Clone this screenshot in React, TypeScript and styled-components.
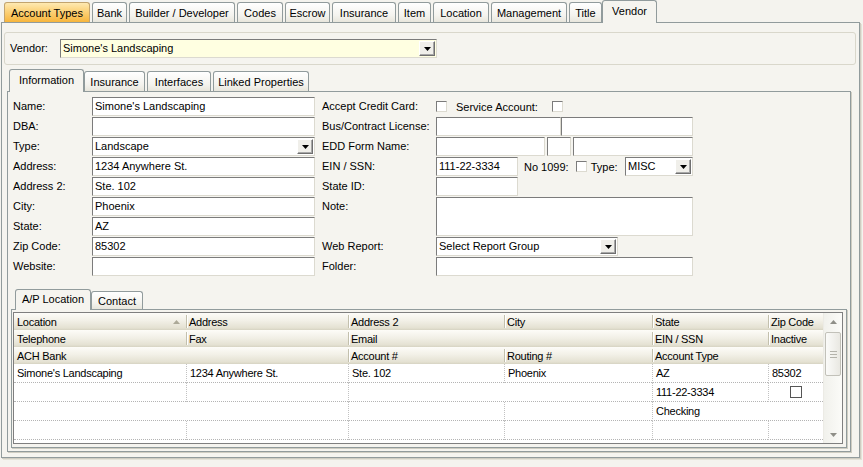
import React from "react";
import styled, { createGlobalStyle, css } from "styled-components";

const BG = "#f5f4ef";
const XP = "#919b9c";

const Global = createGlobalStyle`
  html, body { margin: 0; padding: 0; background: #f4f3ee; }
  body { font-family: "Liberation Sans", Arial, sans-serif; font-size: 11px; color: #000; }
  * { box-sizing: border-box; }
`;

const Screen = styled.div`
  width: 863px;
  height: 467px;
  overflow: hidden;
  background: #f4f3ee;
  display: flex;
  flex-direction: column;
`;

const TabStrip = styled.div<{ $pl: number; $h: number }>`
  display: flex;
  align-items: flex-end;
  gap: 2px;
  height: ${(p) => p.$h}px;
  padding-left: ${(p) => p.$pl}px;
  position: relative;
  z-index: 1;
  flex-shrink: 0;
`;

const Tab = styled.div<{ $w: number; $h: number; $active?: boolean; $hot?: boolean }>`
  width: ${(p) => p.$w}px;
  height: ${(p) => p.$h}px;
  display: flex;
  align-items: center;
  justify-content: center;
  border: 1px solid ${XP};
  border-bottom: none;
  border-radius: 3px 3px 0 0;
  background: linear-gradient(#ffffff, #f4f3ee 65%, #e8e6dc);
  white-space: nowrap;
  flex-shrink: 0;
  ${(p) =>
    p.$hot &&
    css`
      background: linear-gradient(#fee9b2, #fcd47e 40%, #f7b53c);
      border-color: #c2a46e;
    `}
  ${(p) =>
    p.$active &&
    css`
      width: ${p.$w + 4}px;
      height: ${p.$h + 3}px;
      margin: 0 -2px -1px;
      padding-bottom: 2px;
      background: ${BG};
    `}
`;

const MainPanel = styled.div`
  margin-left: 1px;
  width: 859px;
  border: 1px solid ${XP};
  background: ${BG};
  padding: 0 0 5px;
  box-shadow: 1px 1px 0 #cfcdc2, 2px 2px 0 #e4e2d8;
`;

const VendorBox = styled.div`
  margin: 9px 3px 0 2px;
  height: 33px;
  border: 1px solid #d9d7cb;
  border-radius: 3px;
  display: flex;
  align-items: center;
  padding-left: 5px;
`;

const Label = styled.div<{ $w?: number; $top?: boolean }>`
  ${(p) => (p.$w ? `width: ${p.$w}px;` : "")}
  display: flex;
  align-items: ${(p) => (p.$top ? "flex-start" : "center")};
  padding-top: ${(p) => (p.$top ? 3 : 0)}px;
  padding-bottom: ${(p) => (p.$top ? 0 : 2)}px;
  white-space: nowrap;
  flex-shrink: 0;
`;

const Input = styled.div<{ $w?: number; $h?: number; $bg?: string }>`
  width: ${(p) => (p.$w ? `${p.$w}px` : "100%")};
  height: ${(p) => p.$h ?? 19}px;
  background: ${(p) => p.$bg ?? "#ffffff"};
  border: 1px solid;
  border-color: #7b7b7b #dcdad0 #dcdad0 #7b7b7b;
  padding-left: 2px;
  line-height: 17px;
  white-space: nowrap;
  overflow: hidden;
  flex-shrink: 0;
`;

const SelectBox = styled(Input)`
  display: flex;
  align-items: center;
  padding: 0 1px 0 2px;
`;

const SelectText = styled.span`
  flex: 1;
  overflow: hidden;
`;

const DropBtn = styled.span`
  width: 16px;
  height: 15px;
  display: flex;
  align-items: center;
  justify-content: center;
  background: #f0efea;
  border: 1px solid;
  border-color: #ffffff #6f6f6f #6f6f6f #ffffff;
  box-shadow: inset -1px -1px 0 #a8a8a8;
  flex-shrink: 0;
`;

const Check = styled.span<{ $ml?: number; $size?: number; $flat?: boolean }>`
  display: inline-block;
  width: ${(p) => p.$size ?? 11}px;
  height: ${(p) => p.$size ?? 11}px;
  margin-left: ${(p) => p.$ml ?? 0}px;
  background: #ffffff;
  border: 1px solid;
  border-color: ${(p) => (p.$flat ? "#555555" : "#7b7b7b #dcdad0 #dcdad0 #7b7b7b")};
  flex-shrink: 0;
`;

const Text = styled.span<{ $ml?: number }>`
  margin-left: ${(p) => p.$ml ?? 0}px;
  white-space: nowrap;
  flex-shrink: 0;
`;

const InfoArea = styled.div`
  margin: 4px 0 0 5px;
  width: 844px;
`;

const InfoPanel = styled.div`
  border: 1px solid ${XP};
  background: ${BG};
  padding: 5px 2px 3px 3px;
  box-shadow: 1px 1px 0 #cfcdc2;
`;

const Form = styled.div`
  display: flex;
  gap: 7px;
  margin-left: 2px;
`;

const LeftGrid = styled.div`
  display: grid;
  grid-template-columns: 79px 223px;
  grid-auto-rows: 19px;
  row-gap: 1px;
`;

const RightGrid = styled.div`
  display: grid;
  grid-template-columns: 114px 257px;
  grid-template-rows: 19px 19px 19px 19px 19px 39px 19px 19px;
  row-gap: 1px;
`;

const Line = styled.div<{ $gap?: number }>`
  display: flex;
  align-items: center;
  gap: ${(p) => p.$gap ?? 0}px;
`;

const APArea = styled.div`
  margin-top: 13px;
  width: 836px;
`;

const APPanel = styled.div`
  height: 139px;
  border: 1px solid ${XP};
  background: ${BG};
  padding: 2px 3px 3px 1px;
  box-shadow: 1px 1px 0 #cfcdc2;
`;

const Grid = styled.div`
  width: 830px;
  height: 132px;
  border: 1px solid #7f7f7f;
  background: #ffffff;
  display: flex;
  overflow: hidden;
`;

const GridBody = styled.div`
  width: 809px;
  display: flex;
  flex-direction: column;
  letter-spacing: -0.25px;
`;

const cols = "172px 162px 156px 148px 116px 55px";

const GridRow = styled.div`
  display: grid;
  grid-template-columns: ${cols};
`;

const HeadCell = styled.div<{ $span?: number; $sep?: boolean }>`
  grid-column: span ${(p) => p.$span ?? 1};
  height: 17px;
  padding: 0 6px 0 3px;
  position: relative;
  display: flex;
  align-items: center;
  justify-content: space-between;
  white-space: nowrap;
  background: linear-gradient(#fdfcf8 0%, #f2f0e7 45%, #e4e1d2 88%, #d6d3c2 100%);
  ${(p) =>
    p.$sep &&
    css`
      &::before {
        content: "";
        position: absolute;
        left: 0;
        top: 2px;
        bottom: 2px;
        width: 1px;
        background: #c3c0ad;
        box-shadow: 1px 0 0 #ffffff;
      }
    `}
`;

const DataCell = styled.div<{ $span?: number; $first?: boolean; $center?: boolean }>`
  grid-column: span ${(p) => p.$span ?? 1};
  height: 19px;
  padding-left: ${(p) => (p.$center ? 0 : 3)}px;
  border-bottom: 1px dotted #b4b4b4;
  border-left: ${(p) => (p.$first ? "none" : "1px dotted #c2c2c2")};
  display: flex;
  align-items: center;
  justify-content: ${(p) => (p.$center ? "center" : "flex-start")};
  white-space: nowrap;
  overflow: hidden;
`;

const Scrollbar = styled.div`
  width: 19px;
  display: flex;
  flex-direction: column;
  align-items: center;
  background: linear-gradient(to right, #f1f1ec, #fbfbf8);
  border-left: 1px solid #ecebe5;
`;

const ScrollArrow = styled.div`
  height: 17px;
  width: 17px;
  display: flex;
  align-items: center;
  justify-content: center;
  flex-shrink: 0;
`;

const Thumb = styled.div`
  margin-top: 2px;
  width: 16px;
  height: 44px;
  border: 1px solid #c2c1b9;
  border-radius: 2px;
  background: linear-gradient(to right, #fbfbf9, #e9e8e2);
  display: flex;
  align-items: center;
  justify-content: center;
`;

const Track = styled.div`
  flex: 1;
`;

const Arrow = () => (
  <svg width="7" height="4" viewBox="0 0 7 4">
    <polygon points="0,0 7,0 3.5,4" fill="#000" />
  </svg>
);

const Select = ({ w, text }: { w?: number; text: string }) => (
  <SelectBox $w={w}>
    <SelectText>{text}</SelectText>
    <DropBtn>
      <Arrow />
    </DropBtn>
  </SelectBox>
);

type TabDef = { label: string; w: number; active?: boolean; hot?: boolean };

const topTabs: TabDef[] = [
  { label: "Account Types", w: 86, hot: true },
  { label: "Bank", w: 35 },
  { label: "Builder / Developer", w: 106 },
  { label: "Codes", w: 46 },
  { label: "Escrow", w: 45 },
  { label: "Insurance", w: 64 },
  { label: "Item", w: 33 },
  { label: "Location", w: 56 },
  { label: "Management", w: 76 },
  { label: "Title", w: 33 },
  { label: "Vendor", w: 51, active: true },
];

const infoTabs: TabDef[] = [
  { label: "Information", w: 71, active: true },
  { label: "Insurance", w: 61 },
  { label: "Interfaces", w: 64 },
  { label: "Linked Properties", w: 96 },
];

const apTabs: TabDef[] = [
  { label: "A/P Location", w: 72, active: true },
  { label: "Contact", w: 52 },
];

const Tabs = ({ tabs, pl, h, th }: { tabs: TabDef[]; pl: number; h: number; th: number }) => (
  <TabStrip $pl={pl} $h={h}>
    {tabs.map((t) => (
      <Tab key={t.label} $w={t.w} $h={th} $active={t.active} $hot={t.hot}>
        {t.label}
      </Tab>
    ))}
  </TabStrip>
);

const leftFields: { label: string; value: string; select?: boolean }[] = [
  { label: "Name:", value: "Simone's Landscaping" },
  { label: "DBA:", value: "" },
  { label: "Type:", value: "Landscape", select: true },
  { label: "Address:", value: "1234 Anywhere St." },
  { label: "Address 2:", value: "Ste. 102" },
  { label: "City:", value: "Phoenix" },
  { label: "State:", value: "AZ" },
  { label: "Zip Code:", value: "85302" },
  { label: "Website:", value: "" },
];

type HCell = { t: string; span?: number; sort?: boolean };
const headerRows: HCell[][] = [
  [{ t: "Location", sort: true }, { t: "Address" }, { t: "Address 2" }, { t: "City" }, { t: "State" }, { t: "Zip Code" }],
  [{ t: "Telephone" }, { t: "Fax" }, { t: "Email", span: 2 }, { t: "EIN / SSN" }, { t: "Inactive" }],
  [{ t: "ACH Bank", span: 2 }, { t: "Account #" }, { t: "Routing #" }, { t: "Account Type", span: 2 }],
];

type DCell = { t: string; span?: number; check?: boolean };
const dataRows: DCell[][] = [
  [{ t: "Simone's Landscaping" }, { t: "1234 Anywhere St." }, { t: "Ste. 102" }, { t: "Phoenix" }, { t: "AZ" }, { t: "85302" }],
  [{ t: "" }, { t: "" }, { t: "", span: 2 }, { t: "111-22-3334" }, { t: "", check: true }],
  [{ t: "", span: 2 }, { t: "" }, { t: "" }, { t: "Checking", span: 2 }],
  [{ t: "" }, { t: "" }, { t: "" }, { t: "" }, { t: "" }, { t: "" }],
];

export default function App() {
  return (
    <>
      <Global />
      <Screen>
        <Tabs tabs={topTabs} pl={4} h={22} th={20} />
        <MainPanel>
          <VendorBox>
            <Label $w={50}>Vendor:</Label>
            <SelectBox $w={377} $bg="#ffffe1">
              <SelectText>Simone's Landscaping</SelectText>
              <DropBtn>
                <Arrow />
              </DropBtn>
            </SelectBox>
          </VendorBox>

          <InfoArea>
            <Tabs tabs={infoTabs} pl={4} h={22} th={20} />
            <InfoPanel>
              <Form>
                <LeftGrid>
                  {leftFields.map((f) => (
                    <React.Fragment key={f.label}>
                      <Label>{f.label}</Label>
                      {f.select ? <Select text={f.value} /> : <Input>{f.value}</Input>}
                    </React.Fragment>
                  ))}
                </LeftGrid>
                <RightGrid>
                  <Label>Accept Credit Card:</Label>
                  <Line>
                    <Check $ml={0} />
                    <Text $ml={9}>Service Account:</Text>
                    <Check $ml={14} />
                  </Line>

                  <Label>Bus/Contract License:</Label>
                  <Line>
                    <Input $w={125} />
                    <Input $w={132} />
                  </Line>

                  <Label>EDD Form Name:</Label>
                  <Line $gap={2}>
                    <Input $w={109} />
                    <Input $w={24} />
                    <Input $w={120} />
                  </Line>

                  <Label>EIN / SSN:</Label>
                  <Line>
                    <Input $w={82}>111-22-3334</Input>
                    <Text $ml={6}>No 1099:</Text>
                    <Check $ml={7} />
                    <Text $ml={4}>Type:</Text>
                    <Line style={{ marginLeft: "auto" }}>
                      <Select w={68} text="MISC" />
                    </Line>
                  </Line>

                  <Label>State ID:</Label>
                  <Line>
                    <Input $w={82} />
                  </Line>

                  <Label $top>Note:</Label>
                  <Input $h={39} />

                  <Label>Web Report:</Label>
                  <Line>
                    <Select w={182} text="Select Report Group" />
                  </Line>

                  <Label>Folder:</Label>
                  <Input />
                </RightGrid>
              </Form>

              <APArea>
                <Tabs tabs={apTabs} pl={6} h={20} th={18} />
                <APPanel>
                  <Grid>
                    <GridBody>
                      {headerRows.map((row, ri) => (
                        <GridRow key={`h${ri}`}>
                          {row.map((c, ci) => (
                            <HeadCell key={ci} $span={c.span} $sep={ci > 0}>
                              <span>{c.t}</span>
                              {c.sort && (
                                <svg width="7" height="4" viewBox="0 0 7 4">
                                  <polygon points="3.5,0 7,4 0,4" fill="#aca998" />
                                </svg>
                              )}
                            </HeadCell>
                          ))}
                        </GridRow>
                      ))}
                      {dataRows.map((row, ri) => (
                        <GridRow key={`d${ri}`}>
                          {row.map((c, ci) => (
                            <DataCell key={ci} $span={c.span} $first={ci === 0} $center={c.check}>
                              {c.check ? <Check $size={12} $flat /> : c.t}
                            </DataCell>
                          ))}
                        </GridRow>
                      ))}
                    </GridBody>
                    <Scrollbar>
                      <ScrollArrow>
                        <svg width="7" height="4" viewBox="0 0 7 4">
                          <polygon points="3.5,0 7,4 0,4" fill="#8f8f88" />
                        </svg>
                      </ScrollArrow>
                      <Thumb>
                        <svg width="7" height="7" viewBox="0 0 7 7">
                          <rect x="0" y="0" width="7" height="1" fill="#b4b3ab" />
                          <rect x="0" y="3" width="7" height="1" fill="#b4b3ab" />
                          <rect x="0" y="6" width="7" height="1" fill="#b4b3ab" />
                        </svg>
                      </Thumb>
                      <Track />
                      <ScrollArrow>
                        <svg width="7" height="4" viewBox="0 0 7 4">
                          <polygon points="0,0 7,0 3.5,4" fill="#8f8f88" />
                        </svg>
                      </ScrollArrow>
                    </Scrollbar>
                  </Grid>
                </APPanel>
              </APArea>
            </InfoPanel>
          </InfoArea>
        </MainPanel>
      </Screen>
    </>
  );
}
